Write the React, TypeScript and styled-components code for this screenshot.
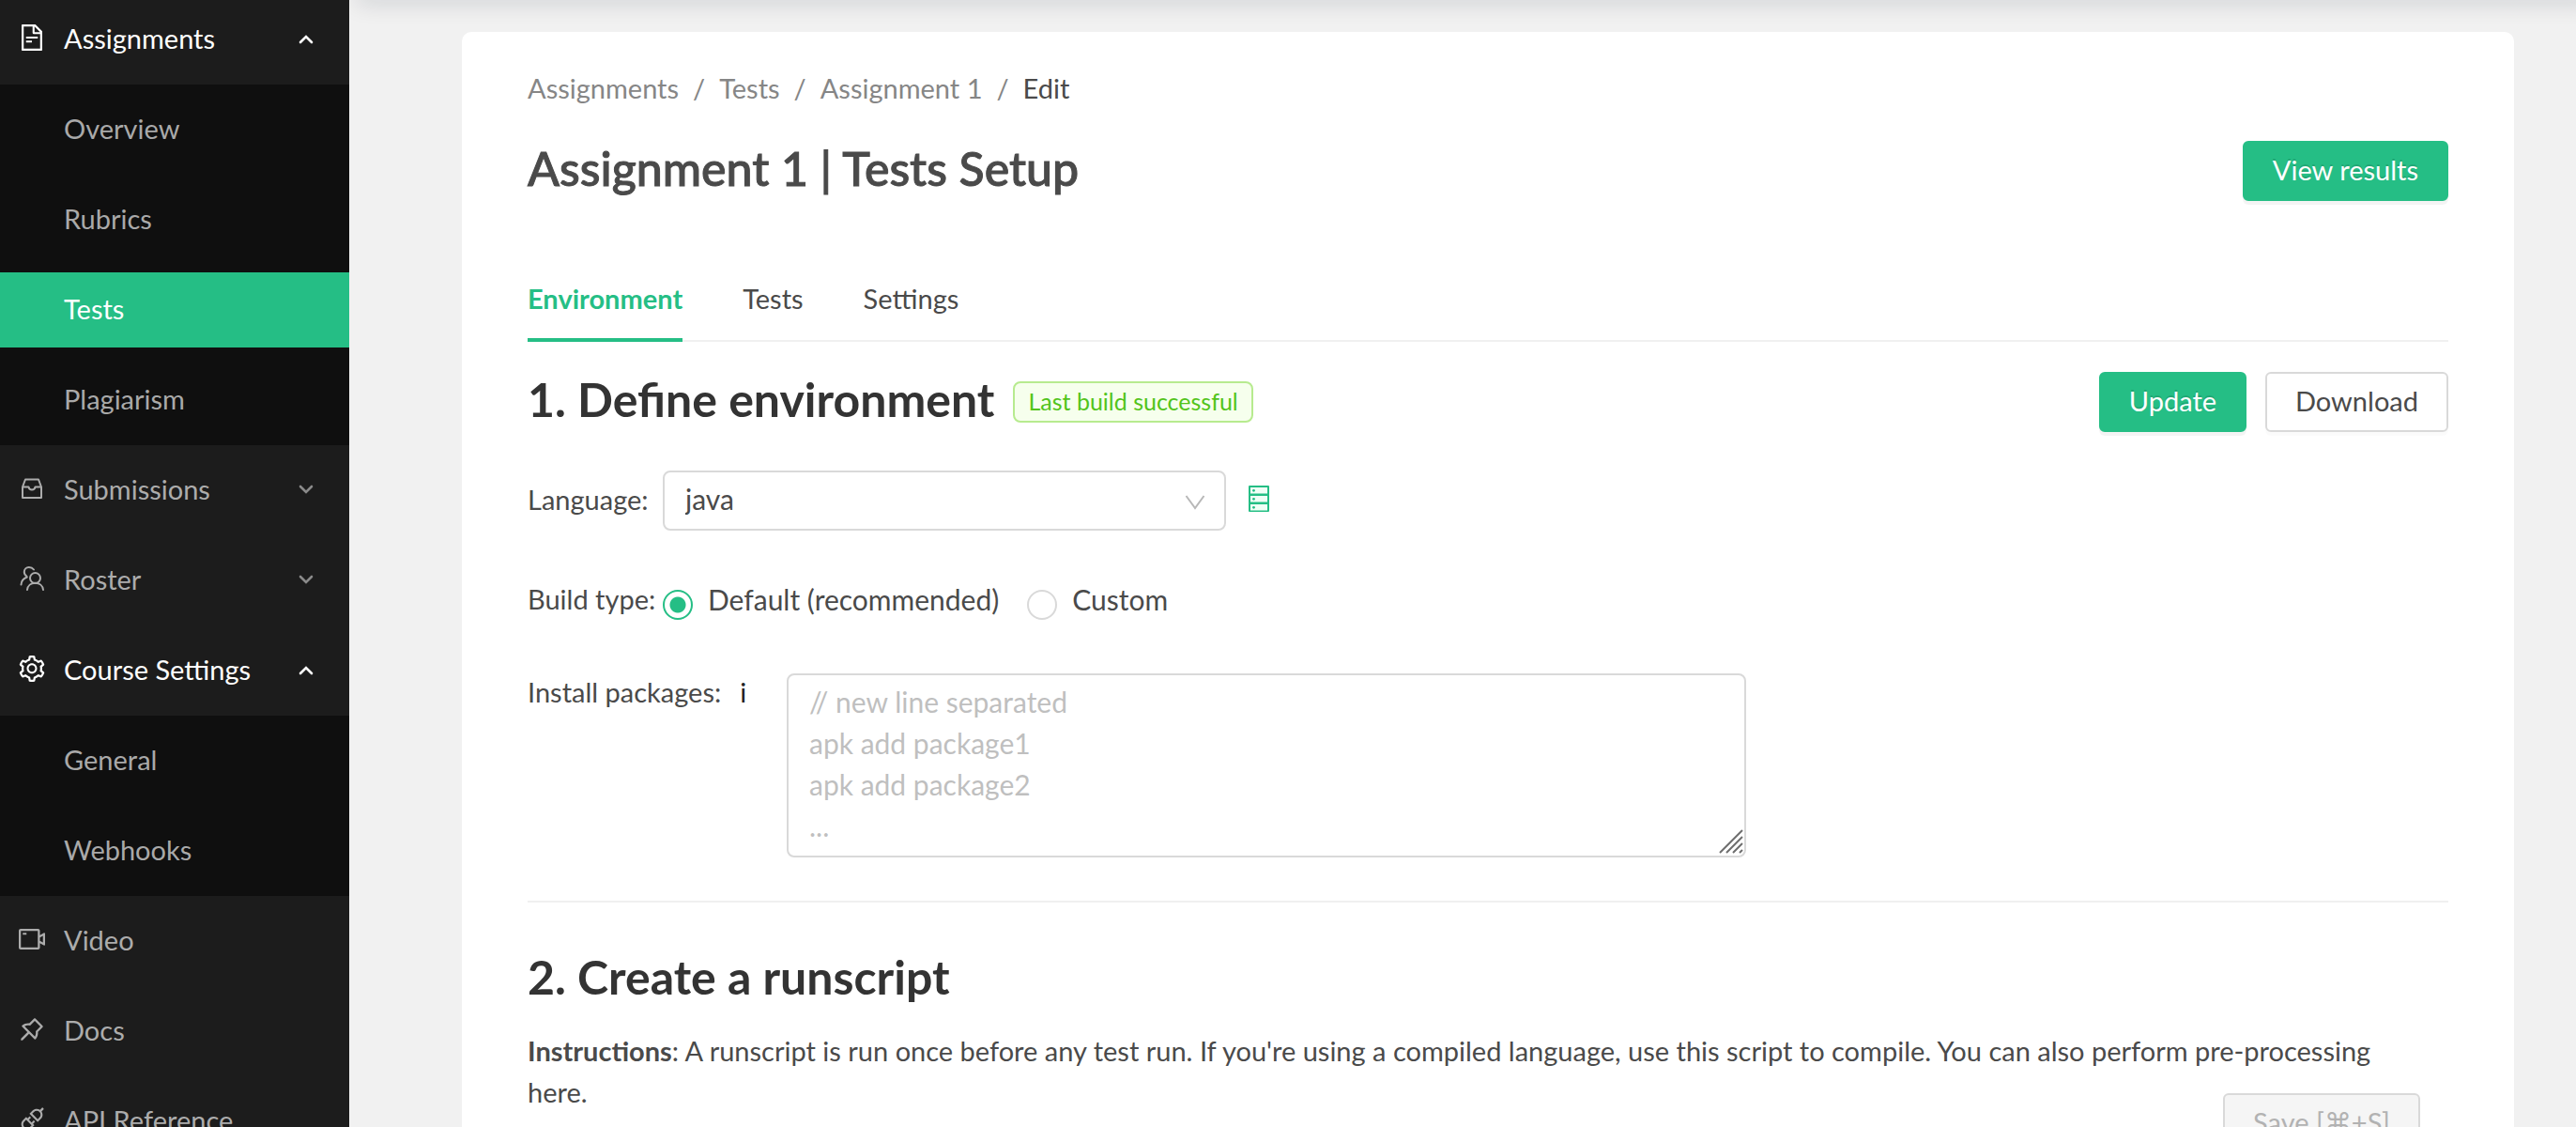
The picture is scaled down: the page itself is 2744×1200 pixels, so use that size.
import React, { useState } from "react";
import styled, { createGlobalStyle, css } from "styled-components";
import {
  AiOutlineApi,
  AiOutlineFileText,
  AiOutlinePushpin,
  AiOutlineSetting,
  AiOutlineVideoCamera,
} from "react-icons/ai";

const green = "#25be85";
const ink = "#4a4a4a";
const line = "#d9d9d9";

const GlobalStyle = createGlobalStyle`
  * { box-sizing: border-box; }
  body { margin: 0; }
  body, button, input, select, textarea {
    font-family: Lato, "Open Sans", "DejaVu Sans", sans-serif;
    font-size: 29px;
    line-height: 44px;
    color: ${ink};
  }
`;

const Shell = styled.div`
  display: flex;
  height: 100vh;
  overflow: hidden;
  background: #f1f1f1;
`;

const Sidebar = styled.nav`
  display: flex;
  flex: 0 0 372px;
  flex-direction: column;
  padding-top: 2px;
  overflow: hidden;
  background: #1c1c1c;

  > :first-child { margin-top: 0; }
`;

const itemBox = css`
  display: flex;
  flex: 0 0 80px;
  align-items: center;
  margin: 8px 0;
  padding: 0 38px 2px 18px;
  border: 0;
  background: none;
  text-align: left;
  text-decoration: none;
`;

const MenuButton = styled.button<{ $open?: boolean }>`
  ${itemBox}
  color: ${(p) => (p.$open ? "#fff" : "#acacac")};
`;

const MenuLink = styled.a`
  ${itemBox}
  color: #acacac;
`;

const MenuIcon = styled.span`
  display: flex;
  width: 50px;
  padding-bottom: 2px;
  font-size: 32px;
`;

const MenuText = styled.span`
  flex: 1;
`;

const Submenu = styled.div`
  display: flex;
  flex: none;
  flex-direction: column;
  background: #0f0f0f;
`;

const SubLink = styled.a<{ $active?: boolean }>`
  ${itemBox}
  padding-left: 68px;
  color: ${(p) => (p.$active ? "#fff" : "#a9a9a9")};
  background: ${(p) => (p.$active ? green : "none")};
`;

const Main = styled.main`
  position: relative;
  flex: 1;
  min-width: 0;
  padding: 34px 66px 0 120px;
  overflow: hidden;

  &::before {
    content: "";
    position: absolute;
    top: -20px;
    right: -20px;
    left: 8px;
    height: 20px;
    box-shadow: 0 4px 24px rgba(0, 21, 41, 0.14);
  }
`;

const Card = styled.div`
  position: relative;
  min-height: calc(100% + 40px);
  padding: 38px 70px;
  border-radius: 10px;
  background: #fff;
`;

const Breadcrumb = styled.nav`
  display: flex;
  gap: 15px;
  color: #868686;
`;

const Crumb = styled.a`
  color: inherit;
  text-decoration: none;
`;

const CurrentCrumb = styled.span`
  color: ${ink};
`;

const TitleRow = styled.header<{ $gap: number }>`
  display: flex;
  align-items: center;
  justify-content: space-between;
  margin-top: ${(p) => p.$gap}px;
`;

const Title = styled.h1`
  margin: 0;
  padding-bottom: 6px;
  font-size: 50px;
  font-weight: 500;
  line-height: 58px;
  -webkit-text-stroke: 1px currentColor;
`;

const SectionTitle = styled.h2`
  margin: 0;
  padding-bottom: 6px;
  font-size: 50px;
  font-weight: 700;
  line-height: 58px;
  color: #333;
`;

const TitleGroup = styled.div`
  display: flex;
  align-items: center;
  gap: 20px;
`;

const Actions = styled.div`
  display: flex;
  gap: 20px;
`;

const Button = styled.button<{ $primary?: boolean }>`
  height: 64px;
  padding: 0 30px 3px;
  border: 2px solid ${(p) => (p.$primary ? green : line)};
  border-radius: 6px;
  background: ${(p) => (p.$primary ? green : "#fff")};
  color: ${(p) => (p.$primary ? "#fff" : ink)};
  box-shadow: 0 4px 0 rgba(0, 0, 0, ${(p) => (p.$primary ? 0.045 : 0.015)});
  text-shadow: ${(p) => (p.$primary ? "0 -2px 0 rgba(0, 0, 0, 0.12)" : "none")};

  &:disabled {
    background: #f5f5f5;
    color: #b2b2b2;
    box-shadow: none;
  }
`;

const Tabs = styled.div`
  display: flex;
  gap: 64px;
  margin-top: 58px;
  box-shadow: inset 0 -2px 0 #f0f0f0;
`;

const Tab = styled.button<{ $active: boolean }>`
  padding: 24px 0 20px;
  border: 0;
  border-bottom: 4px solid ${(p) => (p.$active ? green : "transparent")};
  background: none;
  color: ${(p) => (p.$active ? green : ink)};
  font-weight: ${(p) => (p.$active ? 700 : 400)};
`;

const Tag = styled.span`
  height: 44px;
  padding: 0 14px;
  border: 2px solid #b7eb8f;
  border-radius: 8px;
  background: #f6ffed;
  color: #52c41a;
  font-size: 25px;
  line-height: 38px;
`;

const Field = styled.div<{ $gap: number; $align: string }>`
  display: flex;
  align-items: ${(p) => p.$align};
  margin-top: ${(p) => p.$gap}px;
`;

const Label = styled.label`
  flex: 0 0 144px;
  padding-bottom: 3px;
  white-space: nowrap;
`;

const WideLabel = styled.label`
  display: flex;
  flex: 0 0 276px;
  gap: 20px;
  line-height: 40px;
`;

const InfoMark = styled.span`
  color: #222;
`;

const SelectBox = styled.div`
  position: relative;
  flex: 0 1 600px;
  margin-right: 24px;

  svg {
    position: absolute;
    top: 26px;
    right: 22px;
    pointer-events: none;
  }
`;

const Select = styled.select`
  display: block;
  width: 100%;
  height: 64px;
  padding: 0 22px 4px;
  border: 2px solid ${line};
  border-radius: 8px;
  background: #fff;
  font-size: 30px;
  appearance: none;
`;

const RadioGroup = styled.fieldset`
  display: flex;
  gap: 30px;
  min-width: 0;
  margin: 0;
  padding: 0;
  border: 0;
  font-size: 30px;
`;

const RadioLabel = styled.label`
  display: flex;
  align-items: flex-end;
  gap: 16px;
`;

const Radio = styled.input`
  width: 32px;
  height: 32px;
  margin: 0;
  border: 2px solid ${line};
  border-radius: 50%;
  background: #fff;
  appearance: none;

  &:checked {
    border-color: ${green};
    background: radial-gradient(circle, ${green} 8px, #fff 9px);
  }
`;

const AreaBox = styled.div`
  position: relative;
  flex: 0 1 1022px;

  svg {
    position: absolute;
    right: 3px;
    bottom: 4px;
    pointer-events: none;
  }
`;

const TextArea = styled.textarea`
  display: block;
  width: 100%;
  height: 196px;
  padding: 6px 22px;
  border: 2px solid ${line};
  border-radius: 8px;
  font-size: 30px;
  resize: none;

  &::placeholder { color: #bfbfbf; }
`;

const Divider = styled.hr`
  height: 2px;
  margin: 46px 0 50px;
  border: 0;
  background: #f0f0f0;
`;

const Instructions = styled.p`
  margin: 22px 0 0;
  padding-right: 40px;
`;

const Editor = styled.section`
  position: relative;
`;

const SaveButton = styled(Button)`
  position: absolute;
  top: -21px;
  right: 30px;
`;

const Caret = ({ up }: { up?: boolean }) => (
  <svg width="16" height="16" viewBox="0 0 16 16" fill="none" stroke={up ? "#fff" : "#8a8a8a"} strokeWidth="2.6" strokeLinecap="round">
    <path d={up ? "M2 12 8 6l6 6" : "M2 5l6 6 6-6"} />
  </svg>
);

const InboxIcon = () => (
  <svg width="32" height="32" viewBox="-2 -2 32 32" fill="none" stroke="currentColor" strokeWidth="2" strokeLinejoin="round">
    <path d="M4 12.500 7 4.500h14l3 8v11.500H4z" />
    <path d="M4 12.500h6.500c.4 2 1.700 3 3.500 3s3.100-1 3.500-3H24" />
  </svg>
);

const PeopleIcon = () => (
  <svg width="32" height="32" viewBox="-2 -2 32 32" fill="none" stroke="currentColor" strokeWidth="2" strokeLinecap="round">
    <circle cx="17.500" cy="13.500" r="5.500" />
    <path d="M9 26c.5-4.500 4-7.200 8.500-7.200S25.500 21.500 26 26" />
    <path d="M16 4.500C14.500 2.500 12.500 2 10.800 2 8 2 5.800 4.200 5.800 7c0 2 1 3.500 2.600 4.500M8.800 12.500C5 14 2.700 16.500 2.500 20.500" />
  </svg>
);

const EnvironmentLink = styled.a`
  display: flex;
  padding-bottom: 4px;
`;

const DatabaseIcon = () => (
  <svg width="22" height="28" viewBox="0 0 22 28">
    <rect width="22" height="28" rx="1" fill={green} />
    {[2, 11, 20].map((y) => (
      <g key={y}>
        <rect x="2" y={y} width="18" height="6.500" fill="#f0fff6" />
        <circle cx="5.500" cy={y + 3.3} r="1.400" fill={green} />
      </g>
    ))}
  </svg>
);

export default function App() {
  const [tab, setTab] = useState("Environment");
  const [build, setBuild] = useState("default");

  return (
    <>
      <GlobalStyle />
      <Shell>
        <Sidebar aria-label="Main">
          <MenuButton $open aria-expanded>
            <MenuIcon><AiOutlineFileText /></MenuIcon>
            <MenuText>Assignments</MenuText>
            <Caret up />
          </MenuButton>
          <Submenu>
            <SubLink href="#overview">Overview</SubLink>
            <SubLink href="#rubrics">Rubrics</SubLink>
            <SubLink href="#tests" $active>Tests</SubLink>
            <SubLink href="#plagiarism">Plagiarism</SubLink>
          </Submenu>
          <MenuButton aria-expanded={false}>
            <MenuIcon><InboxIcon /></MenuIcon>
            <MenuText>Submissions</MenuText>
            <Caret />
          </MenuButton>
          <MenuButton aria-expanded={false}>
            <MenuIcon><PeopleIcon /></MenuIcon>
            <MenuText>Roster</MenuText>
            <Caret />
          </MenuButton>
          <MenuButton $open aria-expanded>
            <MenuIcon><AiOutlineSetting /></MenuIcon>
            <MenuText>Course Settings</MenuText>
            <Caret up />
          </MenuButton>
          <Submenu>
            <SubLink href="#general">General</SubLink>
            <SubLink href="#webhooks">Webhooks</SubLink>
          </Submenu>
          <MenuLink href="#video">
            <MenuIcon><AiOutlineVideoCamera /></MenuIcon>
            <MenuText>Video</MenuText>
          </MenuLink>
          <MenuLink href="#docs">
            <MenuIcon><AiOutlinePushpin /></MenuIcon>
            <MenuText>Docs</MenuText>
          </MenuLink>
          <MenuLink href="#api">
            <MenuIcon><AiOutlineApi /></MenuIcon>
            <MenuText>API Reference</MenuText>
          </MenuLink>
        </Sidebar>

        <Main>
          <Card>
            <Breadcrumb aria-label="Breadcrumb">
              <Crumb href="#assignments">Assignments</Crumb>
              <span>/</span>
              <Crumb href="#tests">Tests</Crumb>
              <span>/</span>
              <Crumb href="#assignment-1">Assignment 1</Crumb>
              <span>/</span>
              <CurrentCrumb>Edit</CurrentCrumb>
            </Breadcrumb>

            <TitleRow $gap={34}>
              <Title>Assignment 1 | Tests Setup</Title>
              <Button $primary>View results</Button>
            </TitleRow>

            <Tabs role="tablist">
              {["Environment", "Tests", "Settings"].map((name) => (
                <Tab key={name} role="tab" aria-selected={tab === name} $active={tab === name} onClick={() => setTab(name)}>
                  {name}
                </Tab>
              ))}
            </Tabs>

            <TitleRow $gap={32}>
              <TitleGroup>
                <SectionTitle>1. Define environment</SectionTitle>
                <Tag>Last build successful</Tag>
              </TitleGroup>
              <Actions>
                <Button $primary>Update</Button>
                <Button>Download</Button>
              </Actions>
            </TitleRow>

            <Field $gap={41} $align="center">
              <Label htmlFor="language">Language:</Label>
              <SelectBox>
                <Select id="language" defaultValue="java">
                  <option value="java">java</option>
                  <option value="python">python</option>
                </Select>
                <svg width="22" height="16" viewBox="0 0 22 16" fill="none" stroke="#b8b8b8" strokeWidth="2">
                  <path d="M1.500 1 11 14 20.500 1" />
                </svg>
              </SelectBox>
              <EnvironmentLink href="#environments" aria-label="Environments">
                <DatabaseIcon />
              </EnvironmentLink>
            </Field>

            <Field $gap={51} $align="flex-start">
              <Label as="span" id="build-type">Build type:</Label>
              <RadioGroup aria-labelledby="build-type">
                <RadioLabel>
                  <Radio type="radio" name="build" checked={build === "default"} onChange={() => setBuild("default")} />
                  Default (recommended)
                </RadioLabel>
                <RadioLabel>
                  <Radio type="radio" name="build" checked={build === "custom"} onChange={() => setBuild("custom")} />
                  Custom
                </RadioLabel>
              </RadioGroup>
            </Field>

            <Field $gap={54} $align="flex-start">
              <WideLabel htmlFor="packages">
                Install packages:
                <InfoMark>i</InfoMark>
              </WideLabel>
              <AreaBox>
                <TextArea id="packages" placeholder={"// new line separated\napk add package1\napk add package2\n..."} />
                <svg width="26" height="26" viewBox="0 0 26 26" stroke="#6e6e6e" strokeWidth="2">
                  <path d="M1 25 25 1M8 25 25 8M15 25 25 15M22 25l3-3" />
                </svg>
              </AreaBox>
            </Field>

            <Divider />

            <SectionTitle>2. Create a runscript</SectionTitle>
            <Instructions>
              <strong>Instructions</strong>: A runscript is run once before any test run. If you're using a compiled
              language, use this script to compile. You can also perform pre-processing here.
            </Instructions>
            <Editor>
              <SaveButton disabled>Save [⌘+S]</SaveButton>
            </Editor>
          </Card>
        </Main>
      </Shell>
    </>
  );
}
